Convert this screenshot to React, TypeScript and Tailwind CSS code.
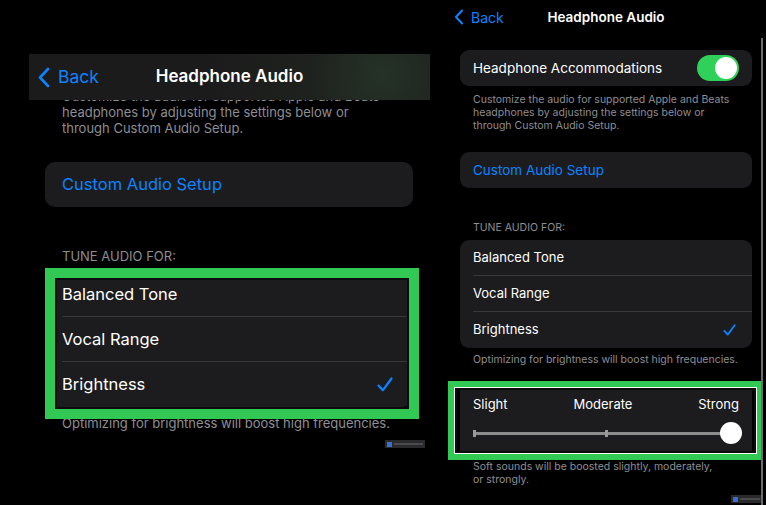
import React from 'react';

const Chevron = ({ className }: { className?: string }) => (
  <svg viewBox="0 0 12 21" className={className} fill="none">
    <path d="M10 2 L2 10.5 L10 19" stroke="#0a84ff" strokeWidth="2.6" strokeLinecap="round" strokeLinejoin="round" />
  </svg>
);

const Check = ({ className }: { className?: string }) => (
  <svg viewBox="0 0 16 15" className={className} fill="none">
    <path d="M1.5 8.5 L5.8 13.3 L14.5 1.5" stroke="#0a84ff" strokeWidth="2.2" strokeLinecap="round" strokeLinejoin="round" />
  </svg>
);

const Badge = () => (
  <div className="flex items-center gap-[2px] bg-[#2a2a2c] px-[2px] h-[8px] w-full">
    <div className="w-[5px] h-[5px] bg-[#3a6fd0]" />
    <div className="h-[2px] flex-1 bg-[#4a4a4c]" />
  </div>
);

const LeftPanel = () => {
  const rows = ['Balanced Tone', 'Vocal Range', 'Brightness'];
  return (
    <div className="w-[440px] shrink-0 pt-[54px] relative">
      <div className="relative z-10 ml-[29px] w-[401px] h-[46px] grid grid-cols-[1fr_auto_1fr] items-center bg-[radial-gradient(circle_at_88%_45%,#253226_0%,#1e211e_22%,#1b1b1b_50%)]">
        <div className="flex items-center pl-[9px] gap-[8px] text-[#0a84ff] text-[17.5px]">
          <Chevron className="w-[12px] h-[21px]" />
          <span>Back</span>
        </div>
        <div className="text-white text-[17px] font-semibold">Headphone Audio</div>
        <div />
      </div>
      <div className="-mt-[12px] pl-[62px] text-[13px] leading-[16px] text-[#8e8e93] whitespace-nowrap">
        Customize the audio for supported Apple and Beats
        <br />
        headphones by adjusting the settings below or
        <br />
        through Custom Audio Setup.
      </div>
      <div className="mt-[26px] ml-[45px] w-[368px] h-[45px] rounded-[10px] bg-[#1c1c1e] flex items-center px-[17px] text-[16.5px] text-[#0a84ff]">
        Custom Audio Setup
      </div>
      <div className="mt-[41px] pl-[62px] text-[13px] leading-[16px] text-[#8e8e93]">TUNE AUDIO FOR:</div>
      <div className="relative mt-[8px] ml-[45px] w-[368px] rounded-[10px] bg-[#1c1c1e]">
        {rows.map((r, i) => (
          <div key={r} className="h-[45px] pl-[17px] flex">
            <div className={`flex-1 flex items-center justify-between pr-[20px] text-[16.5px] text-white ${i < 2 ? 'border-b border-[#38383a]' : ''}`}>
              <span>{r}</span>
              {i === 2 && <Check className="w-[16px] h-[15px]" />}
            </div>
          </div>
        ))}
        <div className="absolute z-20 left-0 top-[-4px] w-[374px] h-[151px] border-[10px] border-[#31c853]">
          <div className="w-full h-full border-2 border-[#0c0c0c]" />
        </div>
      </div>
      <div className="mt-[8px] pl-[62px] text-[13px] leading-[16px] text-[#8e8e93] whitespace-nowrap">
        Optimizing for brightness will boost high frequencies.
      </div>
      <div className="mt-[9px] ml-[385px] w-[40px]">
        <Badge />
      </div>
    </div>
  );
};

const RightPanel = () => {
  const rows = ['Balanced Tone', 'Vocal Range', 'Brightness'];
  return (
    <div className="flex-1 relative">
      <div className="ml-[8px] w-[316px] h-[34px] grid grid-cols-[1fr_auto_1fr] items-center">
        <div className="flex items-center pl-[6px] gap-[7px] text-[#0a84ff] text-[14px]">
          <Chevron className="w-[10px] h-[16px]" />
          <span>Back</span>
        </div>
        <div className="text-white text-[13.5px] font-semibold">Headphone Audio</div>
        <div />
      </div>
      <div className="mt-[16px] ml-[20px] w-[292px] h-[36px] rounded-[9px] bg-[#1c1c1e] flex items-center justify-between pl-[13px] pr-[13px]">
        <span className="text-white text-[13.5px]">Headphone Accommodations</span>
        <div className="w-[42px] h-[26px] rounded-full bg-[#30d158] flex items-center justify-end pr-[2px]">
          <div className="w-[22px] h-[22px] rounded-full bg-white" />
        </div>
      </div>
      <div className="mt-[7px] pl-[33px] text-[10.5px] leading-[13px] text-[#8e8e93] whitespace-nowrap">
        Customize the audio for supported Apple and Beats
        <br />
        headphones by adjusting the settings below or
        <br />
        through Custom Audio Setup.
      </div>
      <div className="mt-[20px] ml-[20px] w-[292px] h-[36px] rounded-[9px] bg-[#1c1c1e] flex items-center px-[13px] text-[13.5px] text-[#0a84ff]">
        Custom Audio Setup
      </div>
      <div className="mt-[33px] pl-[33px] text-[10.5px] leading-[13px] text-[#8e8e93]">TUNE AUDIO FOR:</div>
      <div className="mt-[6px] ml-[20px] w-[292px] rounded-[9px] bg-[#1c1c1e]">
        {rows.map((r, i) => (
          <div key={r} className="h-[36px] pl-[13px] flex">
            <div className={`flex-1 flex items-center justify-between pr-[16px] text-[13px] text-white ${i < 2 ? 'border-b border-[#38383a]' : ''}`}>
              <span>{r}</span>
              {i === 2 && <Check className="w-[13px] h-[12px]" />}
            </div>
          </div>
        ))}
      </div>
      <div className="mt-[5px] pl-[33px] text-[10.5px] leading-[13px] text-[#8e8e93] whitespace-nowrap">
        Optimizing for brightness will boost high frequencies.
      </div>
      <div className="relative mt-[23px] ml-[20px] w-[292px] h-[63px] bg-[#1c1c1e] px-[13px] pt-[7px]">
        <div className="flex justify-between text-[13px] leading-[16px] text-white">
          <span>Slight</span>
          <span>Moderate</span>
          <span>Strong</span>
        </div>
        <div className="relative mt-[10px] h-[22px] flex items-center">
          <div className="w-[258px] h-[3px] bg-[#8e8e8e] relative flex items-center">
            <div className="absolute left-0 w-[3px] h-[7px] bg-[#9a9a9a]" />
            <div className="absolute left-[132px] w-[3px] h-[7px] bg-[#9a9a9a]" />
          </div>
          <div className="absolute left-[247px] w-[22px] h-[22px] rounded-full bg-white" />
        </div>
        <div className="absolute z-20 left-[-12px] top-[-8px] w-[315px] h-[79px] border-[6px] border-[#31c853]">
          <div className="w-full h-full border border-white">
            <div className="w-full h-full border-2 border-[#0c0c0c]" />
          </div>
        </div>
      </div>
      <div className="mt-[8px] pl-[33px] text-[10.5px] leading-[13px] text-[#8e8e93] whitespace-nowrap">
        Soft sounds will be boosted slightly, moderately,
        <br />
        or strongly.
      </div>
      <div className="mt-[9px] ml-[291px] w-[31px]">
        <Badge />
      </div>
      <div className="absolute z-30 left-[321px] top-[38px] bottom-0 w-[2px] bg-[#6b6b6b]" />
    </div>
  );
};

export default function App() {
  return (
    <div className="w-[766px] h-[505px] bg-black flex overflow-hidden font-['Inter','Noto_Sans',sans-serif] antialiased">
      <LeftPanel />
      <RightPanel />
    </div>
  );
}
